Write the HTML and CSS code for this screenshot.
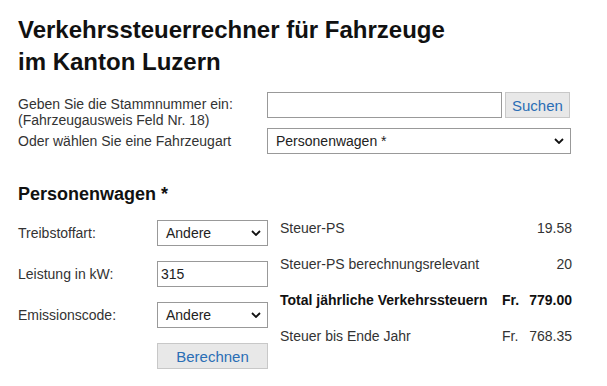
FILE: index.html
```html
<!DOCTYPE html>
<html lang="de">
<head>
<meta charset="utf-8">
<link rel="stylesheet" href="styles.css">
</head>
<body>
<div class="page">
  <h1 class="title">Verkehrssteuerrechner für Fahrzeuge<br>im Kanton Luzern</h1>

  <div class="search">
    <div class="search-label">Geben Sie die Stammnummer ein:<br>(Fahrzeugausweis Feld Nr. 18)</div>
    <div class="search-controls">
      <input class="text-input wide" type="text">
      <button class="btn">Suchen</button>
    </div>
    <div class="search-label single">Oder wählen Sie eine Fahrzeugart</div>
    <div class="search-controls">
      <div class="select full"><span>Personenwagen *</span><svg class="chev" viewBox="0 0 10 6" width="10" height="6"><path d="M1 1 L5 5 L9 1" fill="none" stroke="#111" stroke-width="1.8"/></svg></div>
    </div>
  </div>

  <h2 class="subtitle">Personenwagen *</h2>

  <div class="calc">
    <div class="inputs">
      <div class="row"><span class="label">Treibstoffart:</span><div class="select small"><span>Andere</span><svg class="chev" viewBox="0 0 10 6" width="10" height="6"><path d="M1 1 L5 5 L9 1" fill="none" stroke="#111" stroke-width="1.8"/></svg></div></div>
      <div class="row"><span class="label">Leistung in kW:</span><div class="text-input small">315</div></div>
      <div class="row"><span class="label">Emissionscode:</span><div class="select small"><span>Andere</span><svg class="chev" viewBox="0 0 10 6" width="10" height="6"><path d="M1 1 L5 5 L9 1" fill="none" stroke="#111" stroke-width="1.8"/></svg></div></div>
      <div class="row"><span class="label"></span><button class="btn small">Berechnen</button></div>
    </div>
    <div class="results">
      <div class="res-row"><span class="res-label">Steuer-PS</span><span class="cur"></span><span class="val">19.58</span></div>
      <div class="res-row"><span class="res-label">Steuer-PS berechnungsrelevant</span><span class="cur"></span><span class="val">20</span></div>
      <div class="res-row bold"><span class="res-label">Total jährliche Verkehrssteuern</span><span class="cur">Fr.</span><span class="val">779.00</span></div>
      <div class="res-row"><span class="res-label">Steuer bis Ende Jahr</span><span class="cur">Fr.</span><span class="val">768.35</span></div>
    </div>
  </div>
</div>
</body>
</html>
```

FILE: styles.css
```css
* { box-sizing: border-box; }
body {
  margin: 0;
  background: #fff;
  font-family: "Liberation Sans", Arial, sans-serif;
  color: #333;
  font-size: 14px;
}
.page {
  padding: 14px 18px 0 18px;
  width: 607px;
}
.title {
  margin: 0;
  font-size: 24px;
  line-height: 32px;
  font-weight: bold;
  color: #111;
}
.search {
  margin-top: 14px;
  display: grid;
  grid-template-columns: 249px 304px;
  align-items: center;
}
.search-label {
  line-height: 16px;
  align-self: start;
  padding-top: 4px;
  height: 36px;
}
.search-label.single {
  align-self: center;
  padding-top: 0;
  height: auto;
}
.search-controls {
  display: flex;
  align-self: start;
  gap: 3px;
}
.text-input {
  height: 26px;
  border: 1px solid #999;
  background: #fff;
  font: inherit;
  color: #222;
}
.text-input.wide { width: 235px; }
.btn {
  height: 26px;
  background: #e8e8e8;
  border: 1px solid #c8c8c8;
  color: #2a6eb5;
  font-family: inherit;
  font-size: 15px;
  padding: 0 6px;
}
.select {
  height: 26px;
  border: 1px solid #999;
  display: flex;
  align-items: center;
  justify-content: space-between;
  padding: 0 6px 0 8px;
  color: #222;
  font-size: 14px;
}
.select.full { width: 304px; }
.subtitle {
  margin: 29px 0 0 0;
  font-size: 18px;
  line-height: 22px;
  color: #111;
}
.calc {
  margin-top: 13px;
  display: flex;
}
.inputs {
  display: flex;
  flex-direction: column;
  gap: 15px;
  width: 262px;
  padding-top: 2px;
}
.row {
  display: flex;
  align-items: center;
  height: 26px;
}
.label {
  width: 139px;
}
.small { width: 111px; }
.text-input.small {
  display: flex;
  align-items: center;
  padding-left: 3px;
}
.btn.small { width: 111px; }
.results {
  width: 292px;
  display: flex;
  flex-direction: column;
  gap: 16px;
}
.res-row {
  display: flex;
  height: 20px;
  align-items: center;
}
.res-row.bold { font-weight: bold; color: #111; }
.res-label { flex: 1; }
.cur { width: 25px; }
.val { width: 45px; text-align: right; }
.chev { flex: none; }
```
